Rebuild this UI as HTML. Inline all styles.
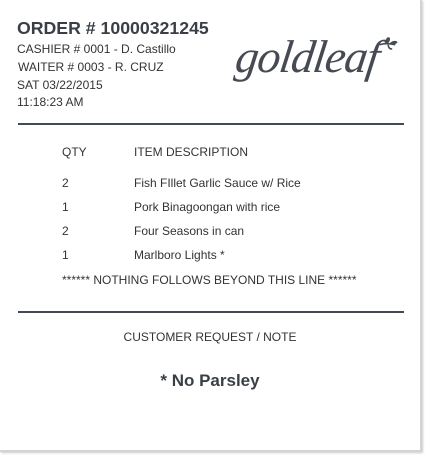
<!DOCTYPE html>
<html><head><style>
body{margin:0;background:#fff;width:425px;height:455px;overflow:hidden;font-family:"Liberation Sans",sans-serif;color:#333;}
.box{position:absolute;left:0;top:0;width:420px;height:450px;background:#fff;border-right:2px solid #d4d4d8;border-bottom:2px solid #d4d4d8;box-shadow:1px 1px 2px #ccc;}
.t{position:absolute;white-space:nowrap;font-size:12px;line-height:14px;}
.hr{position:absolute;left:18px;width:386px;height:2px;background:#444a54;}
</style></head><body>
<div class="box"></div>
<div class="t" style="left:17px;top:18px;font-size:17.7px;line-height:20px;font-weight:bold;color:#3a3f47">ORDER # 10000321245</div>
<div class="t" style="left:17px;top:42px">CASHIER # 0001 - D. Castillo</div>
<div class="t" style="left:18px;top:60px">WAITER # 0003 - R. CRUZ</div>
<div class="t" style="left:17px;top:78px">SAT 03/22/2015</div>
<div class="t" style="left:17px;top:95px">11:18:23 AM</div>
<div class="t" style="left:236px;top:29px;font-family:'Liberation Serif',serif;font-style:italic;font-size:46px;line-height:56px;color:#454a53;transform:skewX(-8deg);letter-spacing:-1px">goldleaf</div>
<svg style="position:absolute;left:378px;top:34px" width="22" height="20" viewBox="0 0 28 22">
<path d="M2 12 C8 10 14 10 22 12" stroke="#454a53" stroke-width="2" fill="none"/>
<path d="M12 11 C8 4 12 1 15 3 C16 6 14 9 12 11Z" fill="#454a53"/>
<path d="M14 11 C18 6 24 6 25 9 C22 12 18 12 14 11Z" fill="#454a53"/>
<path d="M13 12 C13 16 16 18 18 17" stroke="#454a53" stroke-width="2" fill="none"/>
</svg>
<div class="hr" style="top:123px"></div>
<div class="t" style="left:62px;top:145px">QTY</div>
<div class="t" style="left:134px;top:145px">ITEM DESCRIPTION</div>
<div class="t" style="left:62px;top:176px">2</div><div class="t" style="left:134px;top:176px">Fish FIllet Garlic Sauce w/ Rice</div>
<div class="t" style="left:62px;top:200px">1</div><div class="t" style="left:134px;top:200px">Pork Binagoongan with rice</div>
<div class="t" style="left:62px;top:224px">2</div><div class="t" style="left:134px;top:224px">Four Seasons in can</div>
<div class="t" style="left:62px;top:248px">1</div><div class="t" style="left:134px;top:248px">Marlboro Lights *</div>
<div class="t" style="left:62px;top:273px;font-size:12px">****** NOTHING FOLLOWS BEYOND THIS LINE ******</div>
<div class="hr" style="top:311px"></div>
<div class="t" style="left:0;width:420px;text-align:center;top:330px">CUSTOMER REQUEST / NOTE</div>
<div class="t" style="left:0;width:420px;text-align:center;top:371px;font-size:17px;line-height:20px;font-weight:bold;color:#3a3f47">* No Parsley</div>
</body></html>
